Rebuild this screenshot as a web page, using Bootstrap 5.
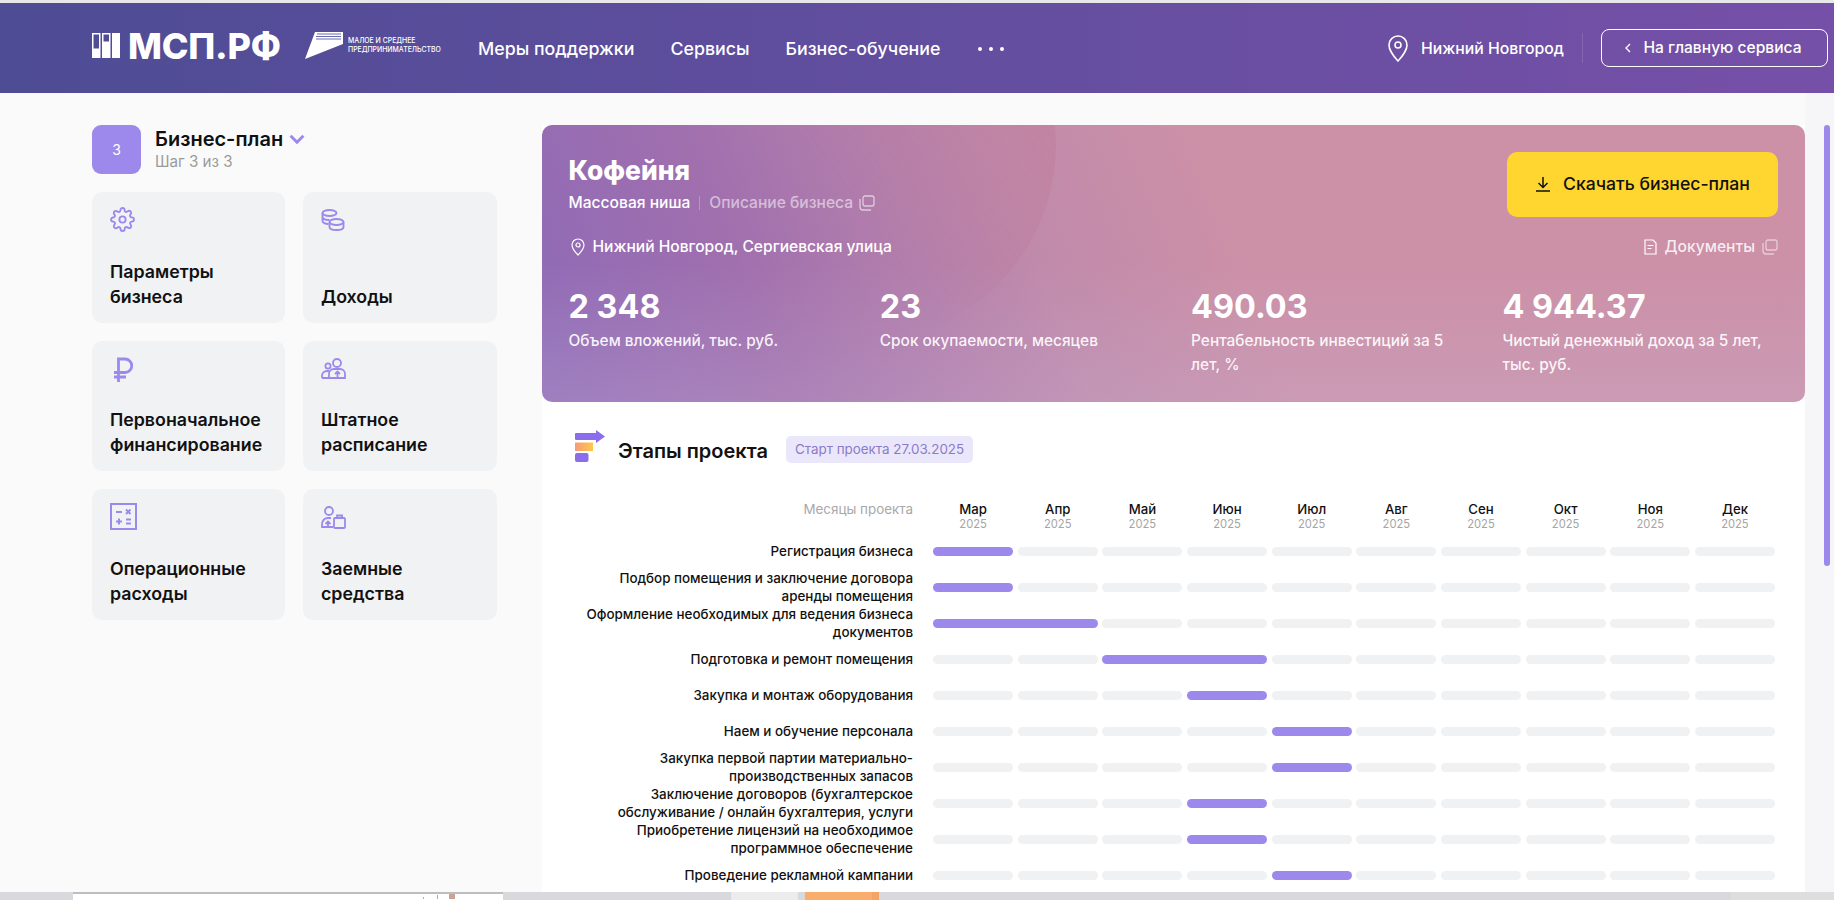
<!DOCTYPE html>
<html lang="ru">
<head>
<meta charset="utf-8">
<title>Бизнес-план</title>
<link href="https://cdn.jsdelivr.net/npm/bootstrap@5.3.0/dist/css/bootstrap.min.css" rel="stylesheet">
<style>
html,body{height:100%}
body{font-family:Inter,"Noto Sans",sans-serif;background:#fafafa;color:#111;width:1834px;height:900px;overflow:hidden}
.topline{height:3px;background:#e8e8ea;flex:none}
.hdr{height:90px;flex:none;background:linear-gradient(90deg,#4e4c95,#7650a8);color:#fff;padding:0 6px 0 92px}
.logo-box{margin-top:-5px}
.logo-word{font-size:36px;font-weight:800;letter-spacing:-.2px;line-height:26px;margin-left:8px;width:152px;white-space:nowrap}
.logo-sub{font-size:6.9px;line-height:8.6px;font-weight:500;margin-left:5px;white-space:nowrap;width:94px}
.logo-wing{margin-left:25px}
.hnav{font-size:17.8px;font-weight:500;margin-left:36px;white-space:nowrap;padding-top:2px}
.hnav a{color:#fff;text-decoration:none}
.hdots{margin-left:37px;margin-top:2px}
.hcity{font-size:15.8px;font-weight:500;margin-left:13px;padding-top:1px}
.hsep{width:1px;height:30px;background:rgba(255,255,255,.13);margin:0 18px}
.hback{width:227px;height:38px;border:1px solid #fff;border-radius:8px;font-size:15.6px;font-weight:500;color:#fff;padding:0 2px 0 0;gap:12px}
.hback:hover{color:#fff}
.stage{flex:1 1 auto;min-height:0}
.side{width:542px;flex:none;padding:32px 0 0 92px}
.stepno{width:49px;height:49px;background:#9d89ec;border-radius:9px;color:#fff;font-size:14px}
.stepbody{margin-left:14px}
.steptitle{font-size:20px;font-weight:600;line-height:24px;margin-top:2px;gap:6px}
.stepsub{font-size:15.2px;color:#9a9a9a;line-height:18px;margin-top:2px}
.tiles{display:grid;grid-template-columns:193px 194px;grid-auto-rows:130.5px;column-gap:18px;row-gap:18px;margin-top:18px}
.tile{background:#f1f2f4;border-radius:10px;padding:14px 18px 14px 18px;font-size:17.8px;font-weight:600;line-height:25px}
.tile svg{display:block}
.ic1{margin-top:1px}
.ic2{margin-top:2px}
.ic3{margin-top:3px}
.panel{width:1263px;flex:none;margin-top:32px;background:#fff;overflow:hidden}
.hero{height:277px;flex:none;border-radius:10px;color:#fff;padding:27px 27px 0 26.5px;position:relative;overflow:hidden;isolation:isolate;
background:linear-gradient(180deg,transparent 50%,rgba(200,178,210,.3) 100%),linear-gradient(68deg,#8d6ab8 0%,#a06fae 18%,#c08aab 40%,#cc90a7 55%,#cc90a7 100%)}
.hero::before{content:"";position:absolute;z-index:-1;left:120px;top:-177px;width:394px;height:394px;border-radius:50%;background:rgba(190,105,140,.24);-webkit-mask-image:linear-gradient(55deg,transparent 42%,rgba(0,0,0,.5) 60%,#000 85%);mask-image:linear-gradient(55deg,transparent 42%,rgba(0,0,0,.5) 60%,#000 85%)}
.htitle{font-size:26.4px;font-weight:800;line-height:34px;margin-top:1px}
.hsub{font-size:15.6px;font-weight:500;line-height:20px;margin-top:6px}
.hdiv{width:1px;height:14px;background:rgba(255,255,255,.25);margin:0 9px}
.dim{color:rgba(255,255,255,.55)}
.dimmer{color:rgba(255,255,255,.85)}
.cp1{margin-left:5px}
.cp2{margin-left:6px}
.dlbtn{width:271px;height:65px;background:#ffd530;border:0;border-radius:10px;color:#111;font-size:17.6px;font-weight:500;padding:0}
.dlbtn:hover{background:#ffd530;color:#111}
.hloc{font-size:15.6px;font-weight:500;line-height:24px;margin-top:18px}
.pin{margin-left:2px}
.stats{display:grid;grid-template-columns:repeat(4,283px);column-gap:28.3px;margin-top:28px}
.snum{font-size:32.4px;font-weight:700;line-height:40px}
.slab{font-size:15.4px;font-weight:500;line-height:24px;margin-top:2px;color:rgba(255,255,255,.92)}
.plan{padding:28px 0 0 33px;flex:1 1 auto;min-height:0}
.ptitle{font-size:20px;font-weight:600;line-height:24px;margin:9px 0 0 13px}
.pbadge{background:#ebe7fb;color:#8a7bc8;font-size:13.4px;height:27px;border-radius:5px;padding:0 9px;margin:6px 0 0 18px;white-space:nowrap}
.grow{display:grid;grid-template-columns:338px 842px;column-gap:20px;align-items:center;height:36px}
.ghead{height:31px;margin:37px 0 2px;align-items:start}
.glabel{font-size:13.4px;font-weight:500;line-height:18px;text-align:right}
.gmuted{color:#a8a8a8;font-weight:400}
.gtrack{display:grid;grid-template-columns:repeat(10,1fr);column-gap:4.500px}
.gc{height:9px;border-radius:4.5px;background:#f0f1f3}
.gc.on{background:#9d89ec}
.two{grid-column:span 2}
.mon{font-size:13.2px;font-weight:500;line-height:18px;text-align:center}
.yr{font-size:11.2px;color:#a5a5a5;line-height:13px;text-align:center}
.rail{flex:1 1 auto;background:#f6f6f9;padding:32px 0 0 18.5px}
.thumb{width:6.5px;height:441px;background:#9d89ec;border-radius:3px}
.strip{height:8px;flex:none;background:#d9d8dc}
.sg{height:8px;flex:none}
.sw{width:430px;margin-left:73px;background:#fff;border-top:2px solid #bdbdbd;padding-right:44px}
.sl{width:67px;margin-left:228px;background:#ececec}
.so{width:67px;margin-left:7px;background:#f9ae6c}
.sd{width:7px;background:#f3a566}
.sr{flex:1 1 auto;margin-left:852px;background:#dedede}
</style>
</head>
<body class="d-flex flex-column">
<div class="topline"></div>
<header class="hdr d-flex align-items-center">
  <svg class="logo-box" width="28" height="25" viewBox="0 0 28 25" fill="#fff" aria-hidden="true"><path d="M0 0h8.5v25H0zM1.5 1.5v14h5.500v-14zM10 0h8.5v25H10zM11.5 1.5v7h5.500v-7zM20 0h8v25h-8z" fill-rule="evenodd"/></svg>
  <div class="logo-word logo-box">МСП.РФ</div>
  <svg class="logo-wing logo-box" width="38" height="27" viewBox="0 0 38 27" aria-hidden="true"><path d="M10 0h28v12L0 27z" fill="#fff"/><path d="M12 2h24M11 4.500h25M11 7h25" stroke="#6a6ab0" stroke-width="1"/></svg>
  <div class="logo-sub logo-box">МАЛОЕ И СРЕДНЕЕ<br>ПРЕДПРИНИМАТЕЛЬСТВО</div>
  <nav class="d-flex align-items-center">
    <div class="hnav"><a href="#">Меры поддержки</a></div>
    <div class="hnav"><a href="#">Сервисы</a></div>
    <div class="hnav"><a href="#">Бизнес-обучение</a></div>
    <svg class="hdots" width="28" height="6" viewBox="0 0 28 6" fill="#fff" aria-hidden="true"><circle cx="3" cy="3" r="2"/><circle cx="14" cy="3" r="2"/><circle cx="25" cy="3" r="2"/></svg>
  </nav>
  <div class="d-flex align-items-center ms-auto">
    <svg width="20" height="27" viewBox="0 0 20 27" fill="none" stroke="#fff" stroke-width="1.6" aria-hidden="true"><path d="M10 1a9 9 0 0 0-9 9c0 6.500 9 16 9 16s9-9.500 9-16a9 9 0 0 0-9-9z"/><circle cx="10" cy="10" r="3"/></svg>
    <span class="hcity">Нижний Новгород</span>
    <span class="hsep"></span>
    <a href="#" class="btn hback d-flex align-items-center justify-content-center"><svg width="6" height="10" viewBox="0 0 6 10" fill="none" stroke="#fff" stroke-width="1.4" aria-hidden="true"><path d="M5 1 1 5l4 4"/></svg><span>На главную сервиса</span></a>
  </div>
</header>
<div class="stage d-flex">
  <aside class="side">
    <div class="d-flex">
      <div class="stepno d-flex align-items-center justify-content-center">3</div>
      <div class="stepbody">
        <div class="steptitle d-flex align-items-center">Бизнес-план<svg width="16" height="10" viewBox="0 0 15 9" fill="none" stroke="#9d89ec" stroke-width="2.800" aria-hidden="true"><path d="m1.500 1.500 6 6 6-6"/></svg></div>
        <div class="stepsub">Шаг 3 из 3</div>
      </div>
    </div>
    <div class="tiles">
      <div class="tile d-flex flex-column justify-content-between">
        <svg class="ic1" width="25" height="25" viewBox="0 0 24 24" fill="none" stroke="#9d89ec" stroke-width="1.800" aria-hidden="true"><circle cx="12" cy="12" r="3"/><path d="M19.400 15a1.650 1.650 0 0 0 .33 1.820l.06.06a2 2 0 0 1 0 2.830 2 2 0 0 1-2.830 0l-.06-.06a1.650 1.650 0 0 0-1.820-.33 1.650 1.650 0 0 0-1 1.510V21a2 2 0 0 1-2 2 2 2 0 0 1-2-2v-.09A1.650 1.650 0 0 0 9 19.400a1.650 1.650 0 0 0-1.820.33l-.06.06a2 2 0 0 1-2.830 0 2 2 0 0 1 0-2.830l.06-.06a1.650 1.650 0 0 0 .33-1.820 1.650 1.650 0 0 0-1.510-1H3a2 2 0 0 1-2-2 2 2 0 0 1 2-2h.09A1.650 1.650 0 0 0 4.600 9a1.650 1.650 0 0 0-.33-1.820l-.06-.06a2 2 0 0 1 0-2.830 2 2 0 0 1 2.830 0l.06.06a1.650 1.650 0 0 0 1.820.33H9a1.650 1.650 0 0 0 1-1.510V3a2 2 0 0 1 2-2 2 2 0 0 1 2 2v.09a1.650 1.650 0 0 0 1 1.510 1.650 1.650 0 0 0 1.820-.33l.06-.06a2 2 0 0 1 2.830 0 2 2 0 0 1 0 2.830l-.06.06a1.650 1.650 0 0 0-.33 1.820V9a1.650 1.650 0 0 0 1.510 1H21a2 2 0 0 1 2 2 2 2 0 0 1-2 2h-.09a1.650 1.650 0 0 0-1.510 1z"/></svg>
        <div>Параметры<br>бизнеса</div>
      </div>
      <div class="tile d-flex flex-column justify-content-between">
        <svg class="ic3" width="24" height="22" viewBox="0 0 23 22" fill="none" stroke="#9d89ec" stroke-width="1.900" aria-hidden="true"><ellipse cx="8" cy="4" rx="7" ry="3"/><path d="M1 4v8c0 1.500 2.500 3 6 3M1 8c0 1.500 2.500 3 7 3"/><ellipse cx="15" cy="13" rx="7" ry="3"/><path d="M8 13v5c0 1.700 3 3 7 3s7-1.300 7-3v-5"/></svg>
        <div>Доходы</div>
      </div>
      <div class="tile d-flex flex-column justify-content-between">
        <svg class="ic2" width="24" height="25" viewBox="0 0 24 25" fill="none" stroke="#9d89ec" stroke-width="2.800" aria-hidden="true"><path d="M8.500 25V2H15a6.500 6.500 0 0 1 0 13.500H4M4 20h12"/></svg>
        <div>Первоначальное<br>финансирование</div>
      </div>
      <div class="tile d-flex flex-column justify-content-between">
        <svg class="ic3" width="25" height="21" viewBox="0 0 25 21" fill="none" stroke="#9d89ec" stroke-width="1.800" aria-hidden="true"><circle cx="16" cy="5" r="4"/><circle cx="7" cy="8" r="2.600"/><path d="M9 20h15v-4a5 5 0 0 0-5-5h-6a5 5 0 0 0-5 5v4zM1 20v-2.500A5 5 0 0 1 6 13h2M1 20h8M16.500 20v-6M14 16l2.500-2.500L19 16"/></svg>
        <div>Штатное<br>расписание</div>
      </div>
      <div class="tile d-flex flex-column justify-content-between">
        <svg width="27" height="27" viewBox="0 0 27 27" fill="none" stroke="#9d89ec" stroke-width="2" aria-hidden="true"><rect x="1" y="1" width="25" height="25"/><path d="M6 9h6M16 6.500l4.500 4.500M20.500 6.500 16 11M6 18.500h6M9 15.500v6M16 16.500h5M16 20.500h5"/></svg>
        <div>Операционные<br>расходы</div>
      </div>
      <div class="tile d-flex flex-column justify-content-between">
        <svg class="ic3" width="25" height="23" viewBox="0 0 25 23" fill="none" stroke="#9d89ec" stroke-width="1.800" aria-hidden="true"><circle cx="8" cy="5" r="4"/><path d="M12 21H1v-3a6 6 0 0 1 6-6h3M7 21v-5M4.500 18 7 15.500 9.500 18"/><rect x="13" y="12" width="11" height="10" rx="1"/><path d="M16 12V9.500h5V12"/></svg>
        <div>Заемные<br>средства</div>
      </div>
    </div>
  </aside>
  <main class="panel d-flex flex-column">
    <section class="hero">
      <div class="d-flex justify-content-between align-items-start">
        <div>
          <div class="htitle">Кофейня</div>
          <div class="hsub d-flex align-items-center"><span>Массовая ниша</span><span class="hdiv"></span><span class="dim">Описание бизнеса</span>
            <svg class="cp1" width="17" height="16" viewBox="0 0 17 16" fill="none" stroke="rgba(255,255,255,.6)" stroke-width="1.300" aria-hidden="true"><rect x="5" y="1" width="11" height="10" rx="2"/><path d="M2 4v8a3 3 0 0 0 3 3h8"/></svg></div>
        </div>
        <a href="#" class="btn dlbtn d-flex align-items-center justify-content-center gap-2"><svg width="16" height="15" viewBox="0 0 16 15" fill="none" stroke="#111" stroke-width="1.500" aria-hidden="true"><path d="M8 0v10M3.500 6 8 10.500 12.500 6M1 14h14"/></svg><span class="ms-1">Скачать бизнес-план</span></a>
      </div>
      <div class="hloc d-flex align-items-center justify-content-between">
        <span class="d-flex align-items-center"><svg class="pin me-2" width="14" height="18" viewBox="0 0 14 18" fill="none" stroke="#fff" stroke-width="1.200" aria-hidden="true"><path d="M7 1a6 6 0 0 0-6 6c0 4 6 10 6 10s6-6 6-10a6 6 0 0 0-6-6z"/><circle cx="7" cy="7" r="2"/></svg>Нижний Новгород, Сергиевская улица</span>
        <span class="d-flex align-items-center"><svg class="me-2" width="13" height="16" viewBox="0 0 13 16" fill="none" stroke="#fff" stroke-width="1.200" aria-hidden="true"><path d="M1 1h8l3 3v11H1zM3.500 6.500h6M3.500 9.500h4"/></svg><span class="dimmer">Документы</span><svg class="cp2" width="17" height="16" viewBox="0 0 17 16" fill="none" stroke="rgba(255,255,255,.55)" stroke-width="1.300" aria-hidden="true"><rect x="5" y="1" width="11" height="10" rx="2"/><path d="M2 4v8a3 3 0 0 0 3 3h8"/></svg></span>
      </div>
      <div class="stats">
        <div><div class="snum">2 348</div><div class="slab">Объем вложений, тыс. руб.</div></div>
        <div><div class="snum">23</div><div class="slab">Срок окупаемости, месяцев</div></div>
        <div><div class="snum">490.03</div><div class="slab">Рентабельность инвестиций за 5<br>лет, %</div></div>
        <div><div class="snum">4 944.37</div><div class="slab">Чистый денежный доход за 5 лет,<br>тыс. руб.</div></div>
      </div>
    </section>
    <section class="plan">
      <div class="d-flex align-items-start">
        <svg width="30" height="32" viewBox="0 0 30 32" aria-hidden="true"><defs><linearGradient id="gy" x1="0" x2="1"><stop offset="0" stop-color="#f79a7a"/><stop offset="1" stop-color="#fdc94a"/></linearGradient></defs><path d="M1 3h20V0l9 6.500L21 13v-3H1a1 1 0 0 1-1-1V4a1 1 0 0 1 1-1z" fill="#8b6cea"/><rect y="12.500" width="18" height="8.500" fill="url(#gy)"/><rect y="23" width="13.500" height="9" rx="2" fill="#8b6cea"/></svg>
        <div class="ptitle">Этапы проекта</div>
        <div class="pbadge d-flex align-items-center">Старт проекта 27.03.2025</div>
      </div>
      <div class="grow ghead">
        <div class="glabel gmuted">Месяцы проекта</div>
        <div class="gtrack">
          <div><div class="mon">Мар</div><div class="yr">2025</div></div>
          <div><div class="mon">Апр</div><div class="yr">2025</div></div>
          <div><div class="mon">Май</div><div class="yr">2025</div></div>
          <div><div class="mon">Июн</div><div class="yr">2025</div></div>
          <div><div class="mon">Июл</div><div class="yr">2025</div></div>
          <div><div class="mon">Авг</div><div class="yr">2025</div></div>
          <div><div class="mon">Сен</div><div class="yr">2025</div></div>
          <div><div class="mon">Окт</div><div class="yr">2025</div></div>
          <div><div class="mon">Ноя</div><div class="yr">2025</div></div>
          <div><div class="mon">Дек</div><div class="yr">2025</div></div>
        </div>
      </div>
      <div class="grow"><div class="glabel">Регистрация бизнеса</div><div class="gtrack"><i class="gc on"></i><i class="gc"></i><i class="gc"></i><i class="gc"></i><i class="gc"></i><i class="gc"></i><i class="gc"></i><i class="gc"></i><i class="gc"></i><i class="gc"></i></div></div>
      <div class="grow"><div class="glabel">Подбор помещения и заключение договора<br>аренды помещения</div><div class="gtrack"><i class="gc on"></i><i class="gc"></i><i class="gc"></i><i class="gc"></i><i class="gc"></i><i class="gc"></i><i class="gc"></i><i class="gc"></i><i class="gc"></i><i class="gc"></i></div></div>
      <div class="grow"><div class="glabel">Оформление необходимых для ведения бизнеса<br>документов</div><div class="gtrack"><i class="gc on two"></i><i class="gc"></i><i class="gc"></i><i class="gc"></i><i class="gc"></i><i class="gc"></i><i class="gc"></i><i class="gc"></i><i class="gc"></i></div></div>
      <div class="grow"><div class="glabel">Подготовка и ремонт помещения</div><div class="gtrack"><i class="gc"></i><i class="gc"></i><i class="gc on two"></i><i class="gc"></i><i class="gc"></i><i class="gc"></i><i class="gc"></i><i class="gc"></i><i class="gc"></i></div></div>
      <div class="grow"><div class="glabel">Закупка и монтаж оборудования</div><div class="gtrack"><i class="gc"></i><i class="gc"></i><i class="gc"></i><i class="gc on"></i><i class="gc"></i><i class="gc"></i><i class="gc"></i><i class="gc"></i><i class="gc"></i><i class="gc"></i></div></div>
      <div class="grow"><div class="glabel">Наем и обучение персонала</div><div class="gtrack"><i class="gc"></i><i class="gc"></i><i class="gc"></i><i class="gc"></i><i class="gc on"></i><i class="gc"></i><i class="gc"></i><i class="gc"></i><i class="gc"></i><i class="gc"></i></div></div>
      <div class="grow"><div class="glabel">Закупка первой партии материально-<br>производственных запасов</div><div class="gtrack"><i class="gc"></i><i class="gc"></i><i class="gc"></i><i class="gc"></i><i class="gc on"></i><i class="gc"></i><i class="gc"></i><i class="gc"></i><i class="gc"></i><i class="gc"></i></div></div>
      <div class="grow"><div class="glabel">Заключение договоров (бухгалтерское<br>обслуживание / онлайн бухгалтерия, услуги</div><div class="gtrack"><i class="gc"></i><i class="gc"></i><i class="gc"></i><i class="gc on"></i><i class="gc"></i><i class="gc"></i><i class="gc"></i><i class="gc"></i><i class="gc"></i><i class="gc"></i></div></div>
      <div class="grow"><div class="glabel">Приобретение лицензий на необходимое<br>программное обеспечение</div><div class="gtrack"><i class="gc"></i><i class="gc"></i><i class="gc"></i><i class="gc on"></i><i class="gc"></i><i class="gc"></i><i class="gc"></i><i class="gc"></i><i class="gc"></i><i class="gc"></i></div></div>
      <div class="grow"><div class="glabel">Проведение рекламной кампании</div><div class="gtrack"><i class="gc"></i><i class="gc"></i><i class="gc"></i><i class="gc"></i><i class="gc on"></i><i class="gc"></i><i class="gc"></i><i class="gc"></i><i class="gc"></i><i class="gc"></i></div></div>
    </section>
  </main>
  <div class="rail"><div class="thumb"></div></div>
</div>
<div class="strip d-flex">
  <div class="sg sw d-flex justify-content-end"><svg width="36" height="5" viewBox="0 0 36 5" aria-hidden="true"><path d="M0 5V3h1v2zM14 5V1h1v4zM26 5V0h6v5z" fill="#c9a393"/></svg></div>
  <div class="sg sl"></div>
  <div class="sg so"></div>
  <div class="sg sd"></div>
  <div class="sg sr"></div>
</div>
<script src="https://cdn.jsdelivr.net/npm/bootstrap@5.3.0/dist/js/bootstrap.bundle.min.js"></script>
</body>
</html>
